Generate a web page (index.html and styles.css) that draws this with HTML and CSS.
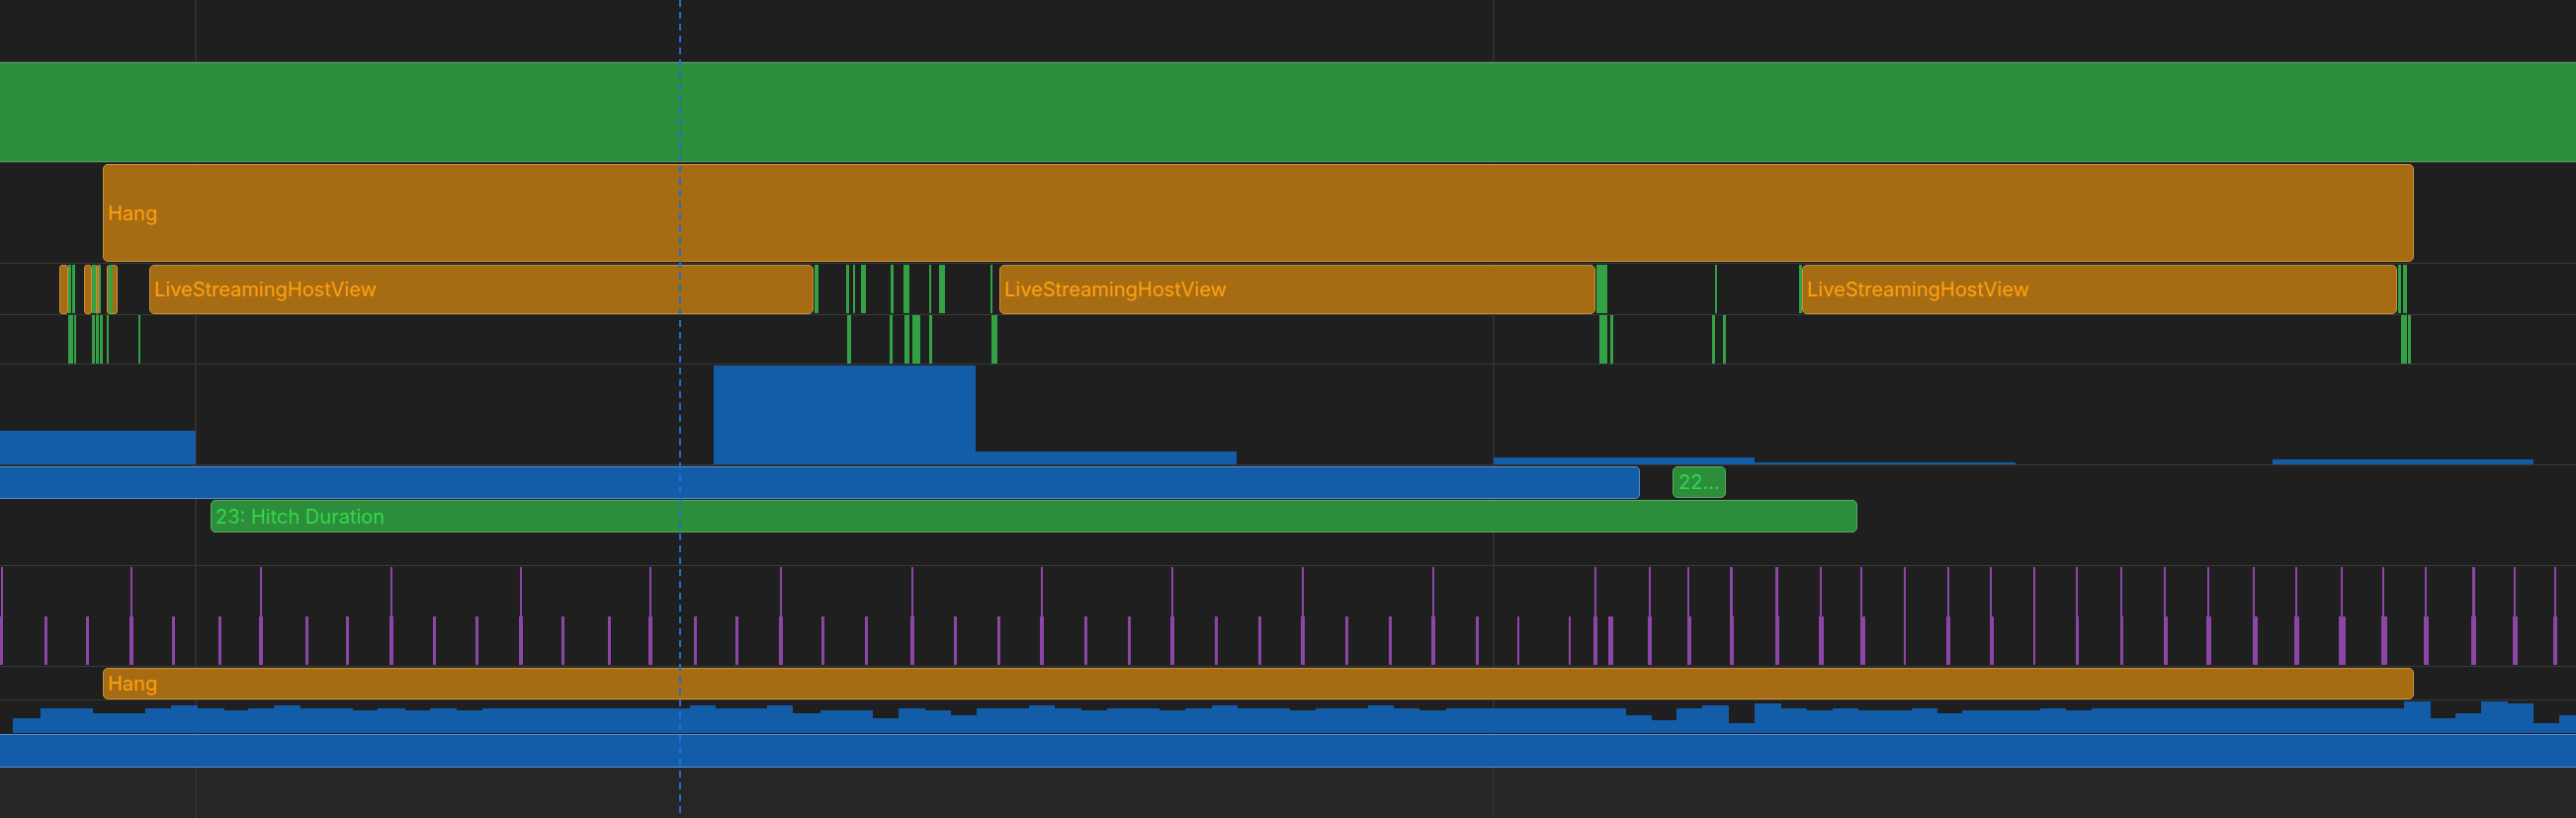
FILE: index.html
```html
<!DOCTYPE html>
<html lang="en">
<head>
<meta charset="utf-8">
<title>Timeline</title>
<link rel="stylesheet" href="styles.css">
</head>
<body>
<div class="timeline">
  <div class="grid-line gl-a"></div>
  <div class="grid-line gl-b"></div>

  <div class="track t-top"></div>

  <div class="track t-band"><div class="band"></div></div>

  <div class="track t-hang">
    <div class="blk orange" style="left:104px;width:2338px"><span class="label">Hang</span></div>
  </div>

  <div class="track t-lane">
    <div class="sliver" style="left:60px;width:9px"></div>
    <div class="sliver" style="left:85px;width:8px"></div>
    <div class="sliver" style="left:97px;width:3px"></div>
    <div class="sliver" style="left:108px;width:11px"></div>
    <div class="blk orange" style="left:151px;width:672px"><span class="label">LiveStreamingHostView</span></div>
    <div class="blk orange" style="left:1011px;width:603px"><span class="label">LiveStreamingHostView</span></div>
    <div class="blk orange" style="left:1823px;width:602px"><span class="label">LiveStreamingHostView</span></div>
    <svg class="ticks lane-ticks" width="2606" height="49" viewBox="0 0 2606 49">
      <rect x="69" y="0" width="3" height="49"/><rect x="73" y="0" width="3" height="49"/>
      <rect x="93" y="0" width="4" height="49"/><rect x="100" y="0" width="2" height="49"/>
      <rect x="110" y="0" width="4" height="49"/><rect x="824" y="0" width="4" height="49"/>
      <rect x="856" y="0" width="3" height="49"/><rect x="863" y="0" width="2" height="49"/>
      <rect x="871" y="0" width="5" height="49"/><rect x="901" y="0" width="3" height="49"/>
      <rect x="914" y="0" width="6" height="49"/><rect x="940" y="0" width="2" height="49"/>
      <rect x="950" y="0" width="6" height="49"/><rect x="1002" y="0" width="2" height="49"/>
      <rect x="1615" y="0" width="11" height="49"/><rect x="1735" y="0" width="2" height="49"/>
      <rect x="1820" y="0" width="3" height="49"/><rect x="2426" y="0" width="3" height="49"/>
      <rect x="2431" y="0" width="4" height="49"/>
    </svg>
  </div>

  <div class="track t-lane2">
    <svg class="ticks" width="2606" height="49" viewBox="0 0 2606 49">
      <rect x="69" y="0" width="5" height="49"/><rect x="75" y="0" width="2" height="49"/>
      <rect x="93" y="0" width="3" height="49"/><rect x="97" y="0" width="3" height="49"/>
      <rect x="101" y="0" width="3" height="49"/><rect x="108" y="0" width="2" height="49"/>
      <rect x="140" y="0" width="2" height="49"/><rect x="857" y="0" width="4" height="49"/>
      <rect x="900" y="0" width="3" height="49"/><rect x="915" y="0" width="5" height="49"/>
      <rect x="923" y="0" width="8" height="49"/><rect x="940" y="0" width="3" height="49"/>
      <rect x="1003" y="0" width="6" height="49"/><rect x="1618" y="0" width="8" height="49"/>
      <rect x="1629" y="0" width="3" height="49"/><rect x="1732" y="0" width="3" height="49"/>
      <rect x="1743" y="0" width="3" height="49"/><rect x="2429" y="0" width="6" height="49"/>
      <rect x="2436" y="0" width="3" height="49"/>
    </svg>
  </div>

  <div class="track t-steps">
    <svg class="chart" width="2606" height="101" viewBox="0 0 2606 101">
      <rect x="0" y="67" width="198" height="34"/>
      <rect x="722" y="1" width="265" height="100"/>
      <rect x="987" y="88" width="264" height="13"/>
      <rect x="1511" y="94" width="264" height="7"/>
      <rect x="1775" y="99" width="264" height="2"/>
      <rect x="2299" y="96" width="264" height="5"/>
    </svg>
  </div>

  <div class="track t-lanes">
    <div class="bar blue top-bar" style="left:-6px;width:1665px"></div>
    <div class="blk green small" style="left:1692px;width:54px"><span class="label">22...</span></div>
    <div class="blk green hitch" style="left:213px;width:1666px"><span class="label">23: Hitch Duration</span></div>
  </div>

  <div class="track t-spikes">
    <svg class="spikes" width="2606" height="99" viewBox="0 0 2606 99">
      <g class="tall">
        <rect x="1" y="0" width="2" height="99"/><rect x="132" y="0" width="2" height="99"/>
        <rect x="263" y="0" width="2" height="99"/><rect x="395" y="0" width="2" height="99"/>
        <rect x="526" y="0" width="2" height="99"/><rect x="657" y="0" width="2" height="99"/>
        <rect x="789" y="0" width="2" height="99"/><rect x="922" y="0" width="2" height="99"/>
        <rect x="1053" y="0" width="2" height="99"/><rect x="1185" y="0" width="2" height="99"/>
        <rect x="1317" y="0" width="2" height="99"/><rect x="1449" y="0" width="2" height="99"/>
        <rect x="1613" y="0" width="2" height="99"/><rect x="1668" y="0" width="2" height="99"/>
        <rect x="1707" y="0" width="2" height="99"/><rect x="1750" y="0" width="3" height="99"/>
        <rect x="1796" y="0" width="3" height="99"/><rect x="1841" y="0" width="2" height="99"/>
        <rect x="1882" y="0" width="2" height="99"/><rect x="1926" y="0" width="2" height="99"/>
        <rect x="1970" y="0" width="2" height="99"/><rect x="2013" y="0" width="2" height="99"/>
        <rect x="2057" y="0" width="2" height="99"/><rect x="2100" y="0" width="2" height="99"/>
        <rect x="2145" y="0" width="2" height="99"/><rect x="2189" y="0" width="2" height="99"/>
        <rect x="2233" y="0" width="2" height="99"/><rect x="2279" y="0" width="2" height="99"/>
        <rect x="2322" y="0" width="2" height="99"/><rect x="2368" y="0" width="2" height="99"/>
        <rect x="2410" y="0" width="2" height="99"/><rect x="2453" y="0" width="2" height="99"/>
        <rect x="2501" y="0" width="3" height="99"/><rect x="2543" y="0" width="2" height="99"/>
        <rect x="2584" y="0" width="2" height="99"/>
      </g>
      <g class="short">
        <rect x="0" y="50" width="3" height="49"/><rect x="45" y="50" width="3" height="49"/>
        <rect x="87" y="50" width="3" height="49"/><rect x="131" y="50" width="4" height="49"/>
        <rect x="174" y="50" width="3" height="49"/><rect x="221" y="50" width="3" height="49"/>
        <rect x="262" y="50" width="4" height="49"/><rect x="309" y="50" width="3" height="49"/>
        <rect x="350" y="50" width="3" height="49"/><rect x="394" y="50" width="4" height="49"/>
        <rect x="438" y="50" width="3" height="49"/><rect x="481" y="50" width="3" height="49"/>
        <rect x="525" y="50" width="4" height="49"/><rect x="568" y="50" width="3" height="49"/>
        <rect x="615" y="50" width="3" height="49"/><rect x="656" y="50" width="4" height="49"/>
        <rect x="702" y="50" width="3" height="49"/><rect x="744" y="50" width="3" height="49"/>
        <rect x="788" y="50" width="4" height="49"/><rect x="831" y="50" width="3" height="49"/>
        <rect x="875" y="50" width="3" height="49"/><rect x="921" y="50" width="4" height="49"/>
        <rect x="965" y="50" width="3" height="49"/><rect x="1009" y="50" width="3" height="49"/>
        <rect x="1052" y="50" width="4" height="49"/><rect x="1097" y="50" width="3" height="49"/>
        <rect x="1141" y="50" width="3" height="49"/><rect x="1184" y="50" width="4" height="49"/>
        <rect x="1229" y="50" width="3" height="49"/><rect x="1273" y="50" width="3" height="49"/>
        <rect x="1316" y="50" width="4" height="49"/><rect x="1361" y="50" width="3" height="49"/>
        <rect x="1405" y="50" width="3" height="49"/><rect x="1448" y="50" width="4" height="49"/>
        <rect x="1493" y="50" width="3" height="49"/><rect x="1535" y="50" width="2" height="49"/>
        <rect x="1587" y="50" width="2" height="49"/><rect x="1612" y="50" width="4" height="49"/>
        <rect x="1627" y="50" width="5" height="49"/><rect x="1667" y="50" width="4" height="49"/>
        <rect x="1707" y="50" width="4" height="49"/><rect x="1750" y="50" width="4" height="49"/>
        <rect x="1796" y="50" width="4" height="49"/><rect x="1840" y="50" width="5" height="49"/>
        <rect x="1882" y="50" width="5" height="49"/><rect x="1926" y="50" width="2" height="49"/>
        <rect x="1969" y="50" width="4" height="49"/><rect x="2013" y="50" width="4" height="49"/>
        <rect x="2057" y="50" width="2" height="49"/><rect x="2100" y="50" width="3" height="49"/>
        <rect x="2145" y="50" width="3" height="49"/><rect x="2189" y="50" width="4" height="49"/>
        <rect x="2232" y="50" width="5" height="49"/><rect x="2279" y="50" width="5" height="49"/>
        <rect x="2321" y="50" width="5" height="49"/><rect x="2366" y="50" width="7" height="49"/>
        <rect x="2409" y="50" width="6" height="49"/><rect x="2452" y="50" width="5" height="49"/>
        <rect x="2500" y="50" width="5" height="49"/><rect x="2542" y="50" width="5" height="49"/>
        <rect x="2583" y="50" width="4" height="49"/>
      </g>
    </svg>
  </div>

  <div class="track t-hang2">
    <div class="blk orange" style="left:104px;width:2338px"><span class="label">Hang</span></div>
  </div>

  <div class="track t-area">
    <svg class="area" width="2606" height="34" viewBox="0 0 2606 34">
      <path d="M13 33 V18 H41 V8 H94 V13 H147 V8 H173 V5 H200 V8 H227 V10 H251 V8 H277 V5 H304 V8 H357 V10 H382 V8 H410 V10 H435 V8 H462 V10 H488 V8 H698 V5 H724 V8 H776 V5 H802 V13 H830 V10 H883 V18 H909 V8 H936 V10 H962 V15 H988 V8 H1041 V5 H1067 V8 H1094 V10 H1120 V8 H1173 V10 H1199 V8 H1226 V5 H1252 V8 H1305 V10 H1331 V8 H1384 V5 H1410 V8 H1436 V10 H1463 V8 H1645 V15 H1671 V20 H1696 V8 H1722 V5 H1749 V23 H1775 V3 H1802 V8 H1828 V10 H1854 V8 H1880 V10 H1934 V8 H1960 V13 H1985 V10 H2064 V8 H2090 V10 H2116 V8 H2432 V1 H2459 V18 H2484 V13 H2510 V1 H2537 V3 H2563 V23 H2589 V15 H2606 V33 Z"/>
    </svg>
    <div class="bar blue bottom-bar"></div>
  </div>

  <div class="track t-rest"></div>

  <div class="playhead"></div>
</div>
</body>
</html>
```

FILE: styles.css
```css
:root {
  --bg: #1f1f1f;
  --bg-low: #262626;
  --sep: #393939;
  --grid: #303030;
  --green: #2c8d3b;
  --green-edge: #5caa66;
  --green-tick: #33a245;
  --green-text: #34d64c;
  --orange: #a66c13;
  --orange-edge: #c9923a;
  --orange-text: #ffa00e;
  --blue: #135ca8;
  --blue-edge: #5a91d2;
  --purple: #8b46a8;
  --playhead: #1f6dd4;
}

html, body {
  margin: 0;
  padding: 0;
  background: var(--bg);
  width: 2606px;
  height: 828px;
  overflow: hidden;
}

.timeline {
  position: relative;
  width: 2606px;
  height: 828px;
  display: flex;
  flex-direction: column;
  font-family: "Inter", "Noto Sans", sans-serif;
}

.track {
  position: relative;
  flex: none;
  box-sizing: border-box;
  border-bottom: 1px solid var(--sep);
}

.t-top { height: 63px; }
.t-band { height: 102px; }
.t-hang { height: 102px; }
.t-lane { height: 52px; }
.t-lane2 { height: 50px; }
.t-steps { height: 102px; }
.t-lanes { height: 102px; }
.t-spikes { height: 102px; }
.t-hang2 { height: 34px; }
.t-area { height: 68px; border-bottom: none; }
.t-rest { flex: 1; border-bottom: none; background: var(--bg-low); }

/* grid + playhead overlays */
.grid-line {
  position: absolute;
  top: 0;
  bottom: 0;
  width: 2px;
  background: var(--grid);
  z-index: 1;
}
.gl-a { left: 197px; }
.gl-b { left: 1510px; }

.playhead {
  position: absolute;
  top: 0;
  bottom: 0;
  left: 687px;
  width: 2px;
  background: repeating-linear-gradient(to bottom, var(--playhead) 0 7px, transparent 7px 12px);
  z-index: 4;
}

/* green band */
.band {
  position: absolute;
  inset: 0;
  background: var(--green);
  border-top: 1px solid var(--green-edge);
  border-bottom: 1px solid #4a9a55;
  z-index: 2;
}

/* blocks */
.blk {
  position: absolute;
  box-sizing: border-box;
  display: flex;
  align-items: center;
  border-radius: 5px;
  overflow: hidden;
  z-index: 2;
}

.blk.orange {
  background: var(--orange);
  border: 1px solid var(--orange-edge);
}
.blk.orange .label { color: var(--orange-text); }

.blk.green {
  background: var(--green);
  border: 1px solid var(--green-edge);
}
.blk.green .label { color: var(--green-text); }

.label {
  font-size: 20px;
  line-height: 1;
  padding-left: 4px;
  white-space: nowrap;
}

.t-hang .blk { top: 1px; height: 99px; }
.t-lane .blk { top: 1px; height: 50px; }
.t-hang2 .blk { top: 1px; height: 32px; }

.sliver {
  position: absolute;
  top: 1px;
  height: 50px;
  box-sizing: border-box;
  background: var(--orange);
  border: 1px solid var(--orange-edge);
  border-radius: 3px;
  z-index: 2;
}

.t-lanes .small { top: 1px; height: 32px; }
.t-lanes .small .label { padding-left: 5px; }
.t-lanes .hitch { top: 35px; height: 33px; }

/* bars */
.bar {
  position: absolute;
  box-sizing: border-box;
  z-index: 2;
}
.bar.blue {
  background: var(--blue);
  border-top: 1px solid var(--blue-edge);
  border-bottom: 1px solid var(--blue-edge);
}
.top-bar {
  top: 1px;
  height: 33px;
  border-right: 1px solid var(--blue-edge);
  border-radius: 0 5px 5px 0;
}
.bottom-bar {
  top: 34px;
  left: 0;
  right: 0;
  height: 34px;
}

/* svg layers */
.ticks, .chart, .spikes, .area {
  position: absolute;
  left: 0;
  display: block;
  z-index: 2;
}
.ticks { top: 0; fill: var(--green-tick); }
.lane-ticks { top: 1px; }
.chart { top: 0; fill: var(--blue); }
.spikes { top: 1px; fill: var(--purple); }
.area { top: 0; fill: var(--blue); }
```
